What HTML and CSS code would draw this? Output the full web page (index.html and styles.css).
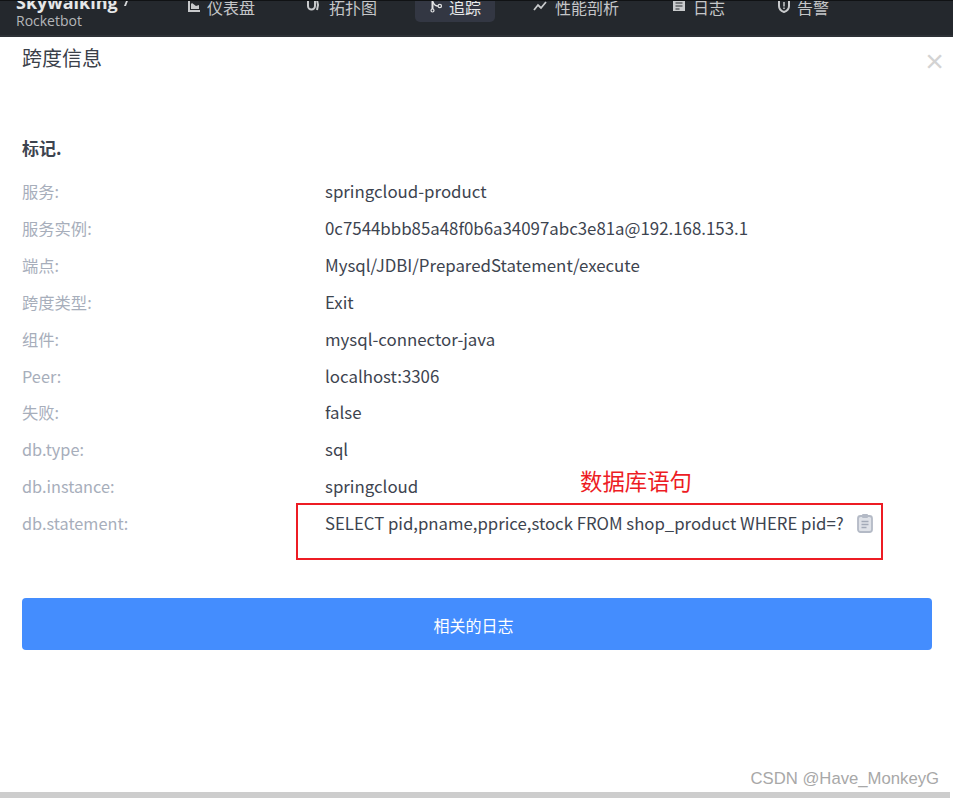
FILE: index.html
```html
<!DOCTYPE html>
<html lang="zh">
<head>
<meta charset="utf-8">
<title>跨度信息</title>
<link rel="stylesheet" href="styles.css">
</head>
<body>
<header class="topbar">
  <div class="brand">
    <div class="brand-name">Skywalking<svg class="brand-mark" width="10" height="12" viewBox="0 0 10 12"><path d="M3 1h6L6 9H4l2-5H2z" fill="#d8dadc"/></svg></div>
    <div class="brand-sub">Rocketbot</div>
  </div>
  <nav class="nav">
    <a class="nav-item item-dash"><svg class="ico" viewBox="0 0 14 14"><path d="M1 0h2v10h10v2H1z M4 9V4l1-1 4 3 3-1v4z" fill="#c8cacc"/></svg>仪表盘</a>
    <a class="nav-item item-topo"><svg class="ico" viewBox="0 0 14 14"><path d="M2 0v6a3.500 3.500 0 0 0 7 0V0M11 0l1 5-1 5" fill="none" stroke="#c8cacc" stroke-width="2"/></svg>拓扑图</a>
    <a class="nav-item item-trace active"><svg class="ico" viewBox="0 0 14 14"><path d="M2.500 0v9" stroke="#e4e5e6" stroke-width="2" fill="none"/><circle cx="2.500" cy="10.500" r="1.500" fill="none" stroke="#e4e5e6" stroke-width="1.200"/><path d="M3 2c1 3 3 4 5 4" stroke="#e4e5e6" stroke-width="1.300" fill="none"/><circle cx="9.800" cy="6" r="1.700" fill="none" stroke="#e4e5e6" stroke-width="1.200"/></svg>追踪</a>
    <a class="nav-item item-prof"><svg class="ico" viewBox="0 0 14 14"><path d="M1 10l4-5 3 3 5-6" fill="none" stroke="#c8cacc" stroke-width="1.800"/></svg>性能剖析</a>
    <a class="nav-item item-log"><svg class="ico" viewBox="0 0 14 14"><path d="M1 0h12v11H1z" fill="#c8cacc"/><path d="M3.500 3h7M3.500 6h7M3.500 9h4" stroke="#24282d" stroke-width="1.200"/></svg>日志</a>
    <a class="nav-item item-alarm"><svg class="ico" viewBox="0 0 14 14"><path d="M7 12c-3-1-5-3-5-6V0h10v6c0 3-2 5-5 6z" fill="none" stroke="#c8cacc" stroke-width="2"/><path d="M7 2v4.500M7 7.500v1.500" stroke="#c8cacc" stroke-width="1.500"/></svg>告警</a>
  </nav>
</header>
<main class="panel">
  <div class="panel-head">
    <h2 class="panel-title">跨度信息</h2>
    <span class="close">×</span>
  </div>
  <h5 class="section-title">标记.</h5>
  <div class="rows">
    <div class="row"><span class="key">服务:</span><span class="val">springcloud-product</span></div>
    <div class="row"><span class="key">服务实例:</span><span class="val">0c7544bbb85a48f0b6a34097abc3e81a@192.168.153.1</span></div>
    <div class="row"><span class="key">端点:</span><span class="val">Mysql/JDBI/PreparedStatement/execute</span></div>
    <div class="row"><span class="key">跨度类型:</span><span class="val">Exit</span></div>
    <div class="row"><span class="key">组件:</span><span class="val">mysql-connector-java</span></div>
    <div class="row"><span class="key">Peer:</span><span class="val">localhost:3306</span></div>
    <div class="row"><span class="key">失败:</span><span class="val">false</span></div>
    <div class="row"><span class="key">db.type:</span><span class="val">sql</span></div>
    <div class="row"><span class="key">db.instance:</span><span class="val">springcloud</span></div>
    <div class="row row-statement">
      <span class="key">db.statement:</span>
      <span class="val val-sql">SELECT pid,pname,pprice,stock FROM shop_product WHERE pid=?</span>
      <svg class="copy" width="16" height="20" viewBox="0 0 16 20"><rect x="1" y="3" width="14" height="16" rx="2.500" fill="#dfe2e8" stroke="#b4bac6" stroke-width="1.800"/><rect x="5" y="1" width="6" height="4" rx="1" fill="#b4bac6"/><path d="M4.500 8.500h7M4.500 11.500h7M4.500 14.500h5" stroke="#a3aab8" stroke-width="1.300"/></svg>
      <div class="annotation"><span class="annotation-label">数据库语句</span></div>
    </div>
  </div>
  <button class="log-btn">相关的日志</button>
</main>
<div class="watermark">CSDN @Have_MonkeyG</div>
<div class="scrollbar"></div>
</body>
</html>
```

FILE: styles.css
```css
* { box-sizing: border-box; }
html, body { margin: 0; height: 798px; overflow: hidden; }
body {
  position: relative;
  display: flex;
  flex-direction: column;
  background: #fff;
  font-family: "Noto Sans CJK SC", "Liberation Sans", sans-serif;
  color: #3d444f;
}
.topbar {
  flex: none;
  height: 37px;
  background: #24282d;
  border-top: 1px solid #101214;
  border-bottom: 2px solid #2d3136;
  display: flex;
  overflow: hidden;
  color: #c8cacc;
}
.brand { width: 171px; padding-left: 16px; margin-top: -9px; flex: none; }
.brand-name {
  font: 700 18px/20px "Open Sans", "Liberation Sans", sans-serif;
  color: #e6e7e8;
}
.brand-mark { margin-left: 2px; }
.brand-sub { font: 14px/17px "Open Sans", "Liberation Sans", sans-serif; color: #b4b6b9; }
.nav { display: flex; flex: 1; height: 21px; margin-top: -1px; }
.nav-item {
  display: flex;
  align-items: flex-start;
  height: 22px;
  font-size: 16px;
  line-height: 14px;
  color: #c4c6c8;
  white-space: nowrap;
}
.ico { width: 14px; height: 14px; margin-right: 6px; flex: none; }
.item-dash { margin-left: 16px; width: 119px; }
.item-topo { width: 109px; }
.item-topo .ico { margin-right: 9px; }
.item-trace { width: 80px; padding-left: 15px; background: #333743; border-radius: 0 0 5px 5px; color: #e6e7e8; }
.item-trace .ico { margin-right: 5px; }
.item-prof { margin-left: 38px; width: 139px; }
.item-prof .ico { margin-right: 8px; }
.item-log { width: 105px; }
.item-log .ico { margin-right: 7px; }
.item-alarm { width: 70px; }
.panel {
  flex: 1;
  padding: 0 21px 0 22px;
  min-height: 0;
}
.panel-head { display: flex; justify-content: space-between; height: 84px; padding-top: 8px; }
.panel-title { margin: 0; font-size: 20px; line-height: 26px; font-weight: 400; color: #3a4049; }
.close { font: 400 32px/26px "Liberation Sans", sans-serif; color: #d3d3d3; margin-top: 3px; margin-right: -12px; }
.section-title { margin: 15px 0 0; font-size: 17px; line-height: 24px; font-weight: 700; color: #3d444f; }
.rows { margin-top: 13.100px; }
.row { display: flex; height: 36.900px; line-height: 24px; padding-top: 6px; font-size: 16px; position: relative; }
.key { width: 303px; flex: none; color: #a7aebb; font-size: 16.300px; }
.val { color: #3d444f; white-space: nowrap; font-size: 16.850px; }
.val-sql { font-size: 16.750px; }
.row-statement { height: 56px; }
.copy { margin: 2px 0 0 13px; flex: none; }
.annotation {
  position: absolute;
  left: 274px;
  top: -2px;
  width: 587px;
  height: 57px;
  border: 2px solid #ed1c24;
}
.annotation-label {
  position: absolute;
  left: 282px;
  top: -41px;
  font-size: 22.400px;
  line-height: 32px;
  color: #ed1c24;
  white-space: nowrap;
}
.log-btn {
  display: block;
  width: 100%;
  height: 52px;
  margin-top: 36.900px;
  padding: 2px 7px 0 0;
  border: 0;
  border-radius: 4px;
  background: #448dfe;
  color: #fff;
  font: 16px "Noto Sans CJK SC", sans-serif;
}
.watermark {
  position: absolute;
  right: 14px;
  bottom: 9px;
  font: 16.700px/20px "Liberation Sans", sans-serif;
  color: #a8a8a8;
}
.scrollbar {
  position: absolute;
  left: 0;
  right: 3px;
  bottom: 0;
  height: 6px;
  background: #cdcdcd;
}
```
